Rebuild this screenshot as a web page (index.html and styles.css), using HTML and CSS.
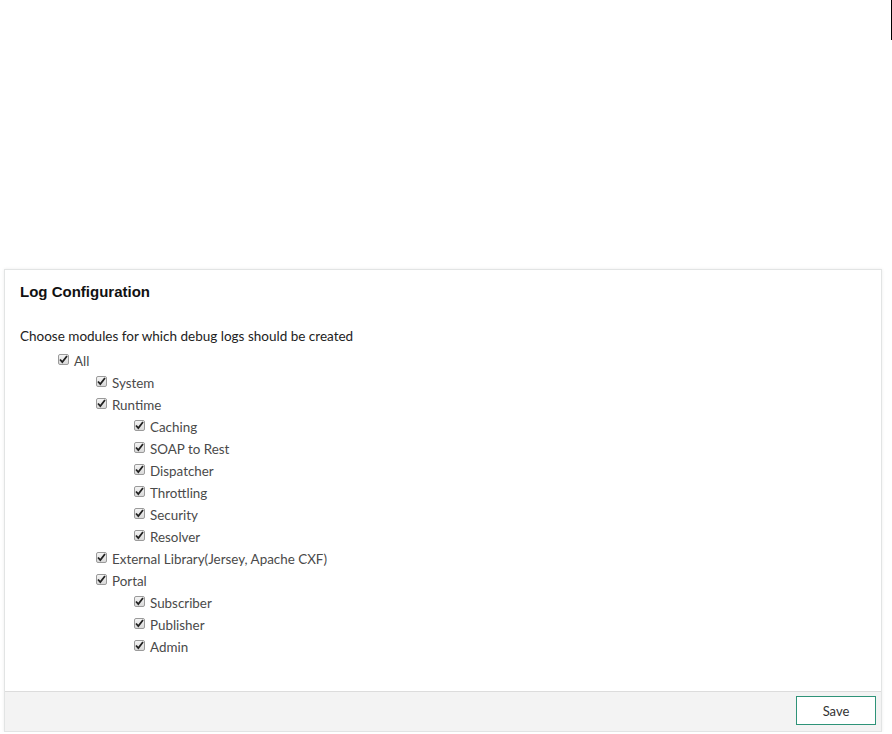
FILE: index.html
```html
<!DOCTYPE html>
<html lang="en">
<head>
    <meta charset="UTF-8">
    <title>Log Configuration</title>
    <link rel="stylesheet" href="styles.css">
</head>
<body>
    <div class="topbar"></div>

    <div class="panel">
        <div class="panel-body">
            <h3 class="panel-title">Log Configuration</h3>
            <p class="intro">Choose modules for which debug logs should be created</p>

            <ul class="tree">
                <li>
                    <label class="opt"><input type="checkbox" checked><span>All</span></label>
                    <ul class="tree">
                        <li><label class="opt"><input type="checkbox" checked><span>System</span></label></li>
                        <li>
                            <label class="opt"><input type="checkbox" checked><span>Runtime</span></label>
                            <ul class="tree">
                                <li><label class="opt"><input type="checkbox" checked><span>Caching</span></label></li>
                                <li><label class="opt"><input type="checkbox" checked><span>SOAP to Rest</span></label></li>
                                <li><label class="opt"><input type="checkbox" checked><span>Dispatcher</span></label></li>
                                <li><label class="opt"><input type="checkbox" checked><span>Throttling</span></label></li>
                                <li><label class="opt"><input type="checkbox" checked><span>Security</span></label></li>
                                <li><label class="opt"><input type="checkbox" checked><span>Resolver</span></label></li>
                            </ul>
                        </li>
                        <li><label class="opt"><input type="checkbox" checked><span>External Library(Jersey, Apache CXF)</span></label></li>
                        <li>
                            <label class="opt"><input type="checkbox" checked><span>Portal</span></label>
                            <ul class="tree">
                                <li><label class="opt"><input type="checkbox" checked><span>Subscriber</span></label></li>
                                <li><label class="opt"><input type="checkbox" checked><span>Publisher</span></label></li>
                                <li><label class="opt"><input type="checkbox" checked><span>Admin</span></label></li>
                            </ul>
                        </li>
                    </ul>
                </li>
            </ul>
        </div>
        <div class="panel-footer">
            <button class="btn-save">Save</button>
        </div>
    </div>
</body>
</html>
```

FILE: styles.css
```css
body {
    margin: 0;
    padding: 0;
    background: #fff;
    font-family: "Lato", "Liberation Sans", sans-serif;
    color: #333;
}

.topbar {
    height: 40px;
    border-right: 1px solid #000;
}

.panel {
    margin: 229px 10px 0 4px;
    border: 1px solid #e2e4e4;
    box-shadow: 0 0 3px rgba(0, 0, 0, 0.08);
    background: #fff;
}

.panel-body {
    padding: 12px 15px 33px 15px;
}

.panel-title {
    margin: 0;
    font-family: "Liberation Sans", Arial, sans-serif;
    font-size: 15px;
    font-weight: bold;
    color: #111;
    line-height: 20px;
}

.intro {
    margin: 24px 0 0 0;
    font-size: 13.5px;
    line-height: 20px;
    color: #222;
}

.tree {
    list-style: none;
    margin: 0;
    padding: 0 0 0 38px;
}

.panel-body > .tree {
    margin-top: 4px;
}

.tree li {
    margin: 0;
}

.opt {
    display: flex;
    align-items: center;
    height: 22px;
    font-size: 13.4px;
    color: #4a4a4a;
}

.opt input {
    appearance: none;
    -webkit-appearance: none;
    width: 11px;
    height: 11px;
    margin: 0 5px 4px 0;
    border: 1px solid #9a9a9a;
    border-radius: 2px;
    background: url("data:image/svg+xml,%3Csvg xmlns='http://www.w3.org/2000/svg' viewBox='0 0 11 11'%3E%3Cpath d='M2 5.5 L4.3 8 L9 2' fill='none' stroke='%23222' stroke-width='1.8'/%3E%3C/svg%3E") center / 11px 11px no-repeat,
        linear-gradient(#f4f4f4, #d9d9d9);
    flex: none;
}

.panel-footer {
    display: flex;
    justify-content: flex-end;
    background: #f3f3f3;
    border-top: 1px solid #dcdcdc;
    padding: 4px 5px 6px 0;
}

.btn-save {
    width: 80px;
    height: 29px;
    background: #fff;
    border: 1px solid #2e9378;
    font-family: "Lato", "Liberation Sans", sans-serif;
    font-size: 13px;
    color: #333;
    cursor: pointer;
}
```
